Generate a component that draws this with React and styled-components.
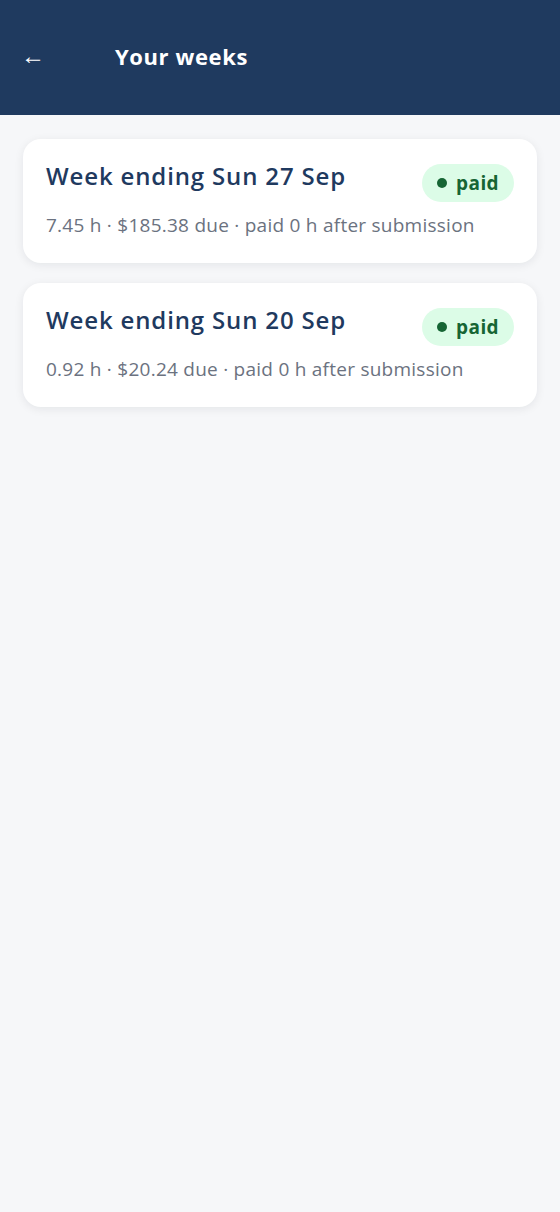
import React from 'react'
import styled, { createGlobalStyle } from 'styled-components'

const GlobalStyle = createGlobalStyle`
  html, body {
    margin: 0;
    padding: 0;
    background: #f6f7f9;
    font-family: "Open Sans", "Noto Sans", sans-serif;
  }
  * { box-sizing: border-box; }
`

const weeks = [
    { id: 1, ending: 'Sun 27 Sep', hours: '7.45', due: '$185.38', status: 'paid', after: 0 },
    { id: 2, ending: 'Sun 20 Sep', hours: '0.92', due: '$20.24', status: 'paid', after: 0 },
]

const App = () => {
    return (
        <Page>
            <GlobalStyle />
            <Header>
                <BackButton aria-label="back">←</BackButton>
                <Title>Your weeks</Title>
            </Header>
            <List>
                {weeks.map(week => (
                    <Card key={week.id}>
                        <CardTop>
                            <WeekTitle>Week ending {week.ending}</WeekTitle>
                            <Badge><Dot />{week.status}</Badge>
                        </CardTop>
                        <Meta>
                            {week.hours} h · {week.due} due · paid {week.after} h after submission
                        </Meta>
                    </Card>
                ))}
            </List>
        </Page>
    )
}

export default App

const Page = styled.div`
    min-height: 100vh;
    background: #f6f7f9;
`

const Header = styled.header`
    height: 115px;
    background: #1f3a5f;
    display: flex;
    align-items: center;
    padding: 0 0 4px 21px;
`

const BackButton = styled.button`
    background: none;
    border: none;
    padding: 0;
    color: #ffffff;
    font-size: 24px;
    font-weight: 300;
    line-height: 1;
    cursor: pointer;
    width: 94px;
    text-align: left;
    font-family: "Liberation Sans", sans-serif;
`

const Title = styled.h1`
    margin: 0;
    color: #ffffff;
    font-size: 22px;
    font-weight: 700;
    letter-spacing: 0.6px;
`

const List = styled.div`
    display: flex;
    flex-direction: column;
    gap: 20px;
    padding: 24px 23px;
`

const Card = styled.div`
    background: #ffffff;
    border-radius: 18px;
    box-shadow: 0 2px 10px rgba(15, 23, 42, 0.08);
    padding: 22px 23px 25px 23px;
`

const CardTop = styled.div`
    display: flex;
    justify-content: space-between;
    align-items: flex-start;
`

const WeekTitle = styled.h2`
    margin: 0;
    color: #1f3a5f;
    font-size: 24px;
    font-weight: 600;
    line-height: 30px;
    letter-spacing: 0.85px;
`

const Badge = styled.span`
    display: inline-flex;
    align-items: center;
    gap: 9px;
    margin-top: 3px;
    height: 38px;
    padding: 0 15px 0 15px;
    border-radius: 19px;
    background: #dcfce7;
    color: #166534;
    font-size: 19px;
    font-weight: 700;
    letter-spacing: 0.4px;
`

const Dot = styled.span`
    width: 10px;
    height: 10px;
    border-radius: 50%;
    background: #166534;
`

const Meta = styled.p`
    margin: 10px 0 0;
    color: #6b7280;
    font-size: 19px;
    line-height: 26px;
    letter-spacing: 0.25px;
`
